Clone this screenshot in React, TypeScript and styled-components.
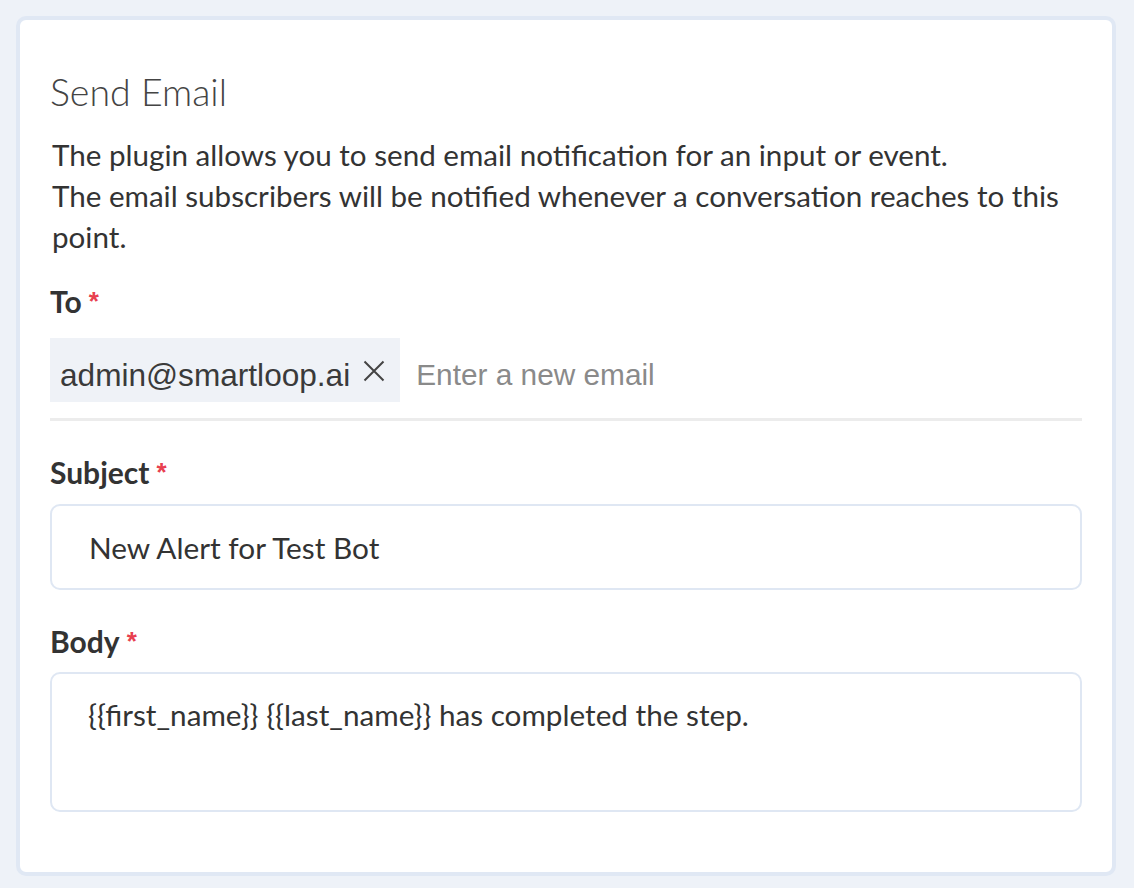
import React from 'react';
import styled, { createGlobalStyle } from 'styled-components';

const GlobalStyle = createGlobalStyle`
    html, body {
        margin: 0;
        padding: 0;
        background-color: #eef2f8;
    }
    * {
        box-sizing: border-box;
    }
`;

const Page = styled.div`
    min-height: 888px;
    padding: 16px 18px 12px 16px;
`;

const Card = styled.section`
    background-color: #ffffff;
    border: 4px solid #e0e8f4;
    border-radius: 10px;
    padding: 50px 30px 60px 30px;
    font-family: Lato, "Open Sans", sans-serif;
    color: #333333;
`;

const Title = styled.h2`
    margin: 0;
    font-size: 37.5px;
    line-height: 43px;
    font-weight: 300;
    color: #444444;
`;

const Description = styled.p`
    margin: 21px 0 0 2px;
    font-size: 29.6px;
    line-height: 41px;
    color: #333333;
`;

const Label = styled.label<{ $top: number }>`
    display: block;
    margin-top: ${({ $top }) => $top}px;
    font-size: 30px;
    line-height: 34px;
    font-weight: 700;
    color: #333333;
`;

const Required = styled.span`
    color: #e8404f;
    font-family: "Liberation Sans", Arial, sans-serif;
    font-size: 26px;
    font-weight: 700;
    margin-left: 7px;
    vertical-align: 3px;
`;

const TagRow = styled.div`
    margin-top: 20px;
    display: flex;
    align-items: stretch;
    gap: 16px;
    padding-bottom: 16px;
    border-bottom: 3px solid #ececec;
    font-family: "Liberation Sans", Arial, sans-serif;
`;

const Chip = styled.span`
    display: flex;
    align-items: center;
    gap: 13px;
    height: 64px;
    padding: 10px 15px 0 10px;
    background-color: #eff2f7;
    color: #3a3a3a;
    font-size: 31.6px;
`;

const RemoveButton = styled.button`
    display: flex;
    align-items: center;
    justify-content: center;
    padding: 0;
    margin-top: -8px;
    border: none;
    background: none;
    width: 22px;
    height: 22px;
    color: #444444;
    cursor: pointer;
`;

const EmailInput = styled.input`
    flex: 1;
    border: none;
    outline: none;
    padding: 10px 0 0 0;
    font-family: inherit;
    font-size: 29.8px;
    color: #333333;
    background: transparent;

    &::placeholder {
        color: #8a8a8a;
    }
`;

const Field = styled.div<{ $height: number }>`
    margin-top: ${({ $height }) => ($height > 100 ? 14 : 15)}px;
    height: ${({ $height }) => $height}px;
    border: 2px solid #dfe7f3;
    border-radius: 10px;
    display: flex;
`;

const TextInput = styled.input`
    flex: 1;
    border: none;
    outline: none;
    background: transparent;
    padding: 0 0 0 37px;
    font-family: Lato, "Open Sans", sans-serif;
    font-size: 29.8px;
    color: #333333;
`;

const TextArea = styled.textarea`
    flex: 1;
    border: none;
    outline: none;
    resize: none;
    background: transparent;
    padding: 24px 20px 0 36px;
    font-family: Lato, "Open Sans", sans-serif;
    font-size: 29.7px;
    line-height: 34px;
    color: #333333;
`;

const CloseIcon = () => (
    <svg width="22" height="22" viewBox="0 0 22 22" fill="none" stroke="currentColor" strokeWidth="2">
        <path d="M1.5 1.5 L20.5 20.5 M20.5 1.5 L1.5 20.5" />
    </svg>
);

const App: React.FC = () => {
    return (
        <Page>
            <GlobalStyle />
            <Card>
                <Title>Send Email</Title>
                <Description>
                    The plugin allows you to send email notification for an input or event.
                    <br />
                    The email subscribers will be notified whenever a conversation reaches to this point.
                </Description>

                <Label $top={27}>
                    To<Required>*</Required>
                </Label>
                <TagRow>
                    <Chip>
                        admin@smartloop.ai
                        <RemoveButton aria-label="Remove">
                            <CloseIcon />
                        </RemoveButton>
                    </Chip>
                    <EmailInput placeholder="Enter a new email" />
                </TagRow>

                <Label $top={34}>
                    Subject<Required>*</Required>
                </Label>
                <Field $height={86}>
                    <TextInput defaultValue="New Alert for Test Bot" />
                </Field>

                <Label $top={34}>
                    Body<Required>*</Required>
                </Label>
                <Field $height={140}>
                    <TextArea defaultValue="{{first_name}} {{last_name}} has completed the step." />
                </Field>
            </Card>
        </Page>
    );
};

export default App;
